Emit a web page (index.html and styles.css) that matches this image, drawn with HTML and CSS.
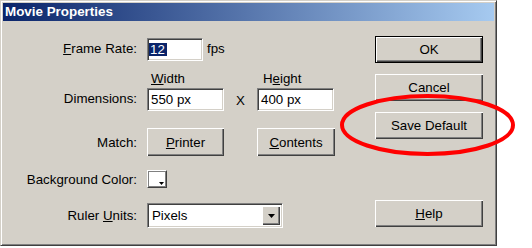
FILE: index.html
```html
<!DOCTYPE html>
<html lang="en">

<head>
    <meta charset="UTF-8">
    <title>Movie Properties</title>
    <link rel="stylesheet" href="styles.css">
</head>

<body>
    <div class="window">
        <div class="titlebar">Movie Properties</div>
        <div class="dialog">
            <div class="form">
                <div class="row row-rate">
                    <span class="label label-up"><u>F</u>rame Rate:</span>
                    <div class="field field-rate"><span class="sel">12</span></div>
                    <span class="unit">fps</span>
                </div>
                <div class="row row-heads">
                    <span class="label"></span>
                    <span class="head head-w"><u>W</u>idth</span>
                    <span class="head head-h">H<u>e</u>ight</span>
                </div>
                <div class="row row-dims">
                    <span class="label label-up">Dimensions:</span>
                    <div class="field field-dim">550 px</div>
                    <span class="times">X</span>
                    <div class="field field-dim">400 px</div>
                </div>
                <div class="row row-match">
                    <span class="label">Match:</span>
                    <button class="btn btn-match"><u>P</u>rinter</button>
                    <span class="gap"></span>
                    <button class="btn btn-match btn-wide"><u>C</u>ontents</button>
                </div>
                <div class="row row-bg">
                    <span class="label">Background Color:</span>
                    <div class="swatch">
                        <svg class="arrow-small" width="5" height="3" viewBox="0 0 5 3">
                            <polygon points="0,0 5,0 2.5,3" fill="#000" />
                        </svg>
                    </div>
                </div>
                <div class="row row-units">
                    <span class="label">Ruler <u>U</u>nits:</span>
                    <div class="combo">
                        <span class="combo-text">Pixels</span>
                        <span class="combo-btn">
                            <svg width="7" height="4" viewBox="0 0 7 4">
                                <polygon points="0,0 7,0 3.5,4" fill="#000" />
                            </svg>
                        </span>
                    </div>
                </div>
            </div>
            <div class="actions">
                <button class="btn btn-action btn-default">OK</button>
                <button class="btn btn-action">Cancel</button>
                <button class="btn btn-action">Save Default</button>
                <button class="btn btn-action btn-help"><u>H</u>elp</button>
            </div>
        </div>
    </div>

    <!-- red annotation drawn over the dialog -->
    <svg class="callout" width="532" height="248" viewBox="0 0 532 248">
        <ellipse cx="427.5" cy="125" rx="85.5" ry="29" fill="none" stroke="#ff0000" stroke-width="4" />
    </svg>
</body>

</html>
```

FILE: styles.css
```css
body {
    margin: 0;
    background: #fff;
    font-family: "Liberation Sans", Arial, sans-serif;
    font-size: 13.3px;
    color: #000;
    position: relative;
    width: 532px;
    height: 248px;
    overflow: hidden;
}

.window {
    width: 497px;
    height: 246px;
    box-sizing: border-box;
    background: #d4d0c8;
    border: 1px solid;
    border-color: #d4d0c8 #404040 #404040 #d4d0c8;
    box-shadow: inset 1px 1px #fff, inset -1px -1px #808080;
    padding: 2px;
}

.titlebar {
    height: 18px;
    line-height: 18px;
    padding-left: 2px;
    background: linear-gradient(to right, #0a246a, #a6caf0);
    color: #fff;
    font-weight: bold;
    font-size: 13.4px;
}

.dialog {
    display: flex;
}

.form {
    width: 372px;
    padding-top: 17px;
    display: flex;
    flex-direction: column;
}

.row {
    display: flex;
    align-items: center;
}

.label {
    width: 144px;
    box-sizing: border-box;
    padding-right: 10px;
    text-align: right;
    flex-shrink: 0;
    white-space: nowrap;
}

.label-up {
    padding-bottom: 3px;
}

.row-rate {
    height: 23px;
}

.row-heads {
    height: 27px;
    align-items: flex-end;
}

.row-heads .head {
    line-height: 15px;
    padding-bottom: 2px;
}

.head-w {
    width: 110px;
    box-sizing: border-box;
    padding-left: 4px;
}

.head-h {
    padding-left: 6px;
}

.row-dims {
    height: 23px;
}

.row-match {
    height: 28px;
    margin-top: 17px;
}

.row-bg {
    height: 18px;
    margin-top: 14px;
}

.row-units {
    height: 25px;
    margin-top: 15px;
}

.field {
    height: 100%;
    box-sizing: border-box;
    background: #fff;
    border: 1px solid;
    border-color: #808080 #fff #fff #808080;
    box-shadow: inset 1px 1px #404040, inset -1px -1px #d4d0c8;
    padding-left: 3px;
    display: flex;
    align-items: center;
}

.field-rate {
    width: 56px;
    padding-left: 1px;
}

.field-rate .sel {
    background: #0a246a;
    color: #fff;
    line-height: 13px;
    padding: 0 2px 0 1px;
}

.field-dim {
    width: 77px;
}

.unit {
    margin-left: 4px;
    padding-bottom: 3px;
}

.times {
    width: 33px;
    text-align: center;
    padding-top: 1px;
}

.gap {
    width: 33px;
}

.btn {
    font-family: inherit;
    font-size: 13.3px;
    color: #000;
    background: #d4d0c8;
    border: none;
    padding: 0;
    margin: 0;
    box-sizing: border-box;
    box-shadow: inset 1px 1px #fff, inset -1px -1px #404040, inset -2px -2px #808080;
}

.btn-match {
    width: 77px;
    height: 28px;
}

.btn-wide {
    width: 78px;
}

.swatch {
    width: 20px;
    height: 18px;
    box-sizing: border-box;
    background: #fff;
    border: 1px solid;
    border-color: #fff #404040 #404040 #fff;
    box-shadow: inset 1px 1px #808080, inset -1px -1px #808080;
    position: relative;
}

.arrow-small {
    position: absolute;
    right: 2px;
    bottom: 2px;
    display: block;
}

.combo {
    width: 136px;
    height: 25px;
    box-sizing: border-box;
    background: #fff;
    border: 1px solid;
    border-color: #808080 #fff #fff #808080;
    box-shadow: inset 1px 1px #404040, inset -1px -1px #d4d0c8;
    display: flex;
    align-items: center;
    padding: 0 2px 0 4px;
}

.combo-text {
    flex: 1;
}

.combo-btn {
    width: 18px;
    height: 19px;
    box-sizing: border-box;
    background: #d4d0c8;
    box-shadow: inset 1px 1px #fff, inset -1px -1px #404040, inset -2px -2px #808080;
    display: flex;
    align-items: center;
    justify-content: center;
}

.combo-btn svg {
    display: block;
}

.actions {
    display: flex;
    flex-direction: column;
    gap: 11px;
    padding-top: 15px;
}

.btn-action {
    width: 108px;
    height: 27px;
}

.btn-default {
    border: 1px solid #000;
}

.btn-help {
    margin-top: 50px;
}

.callout {
    position: absolute;
    left: 0;
    top: 0;
    pointer-events: none;
}
```
